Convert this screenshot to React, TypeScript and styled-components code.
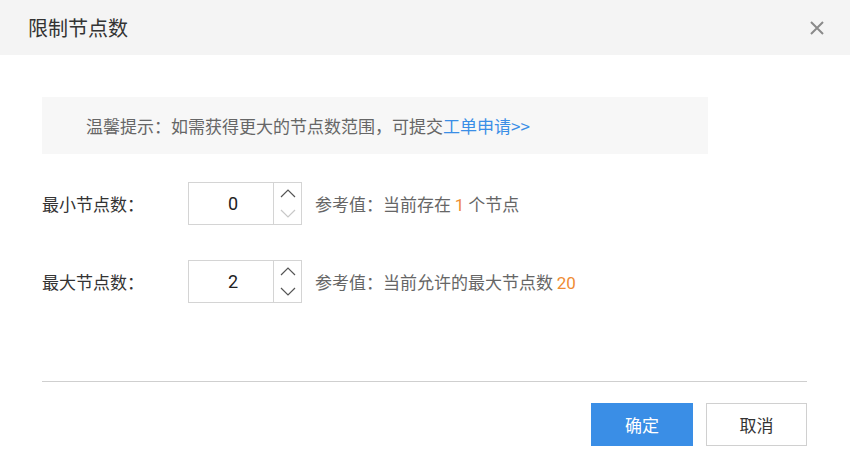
import React from "react";
import styled, { createGlobalStyle } from "styled-components";

const Global = createGlobalStyle`
  html, body { margin: 0; padding: 0; background: #fff; }
  body { font-family: "Noto Sans CJK SC", "Noto Sans", sans-serif; }
`;

const Dialog = styled.div`
  width: 850px;
  height: 467px;
  background: #fff;
  display: flex;
  flex-direction: column;
`;

const Header = styled.div`
  height: 55px;
  background: #f4f4f4;
  display: flex;
  align-items: center;
  justify-content: space-between;
  padding: 0 24px 0 28px;
  box-sizing: border-box;
`;

const Title = styled.div`
  font-size: 20px;
  color: #333;
  line-height: 1;
`;

const Close = styled.button`
  border: 0;
  background: transparent;
  padding: 0;
  width: 18px;
  height: 18px;
  display: flex;
  align-items: center;
  justify-content: center;
  cursor: pointer;
`;

const Body = styled.div`
  padding: 42px 42px 0 42px;
  display: flex;
  flex-direction: column;
`;

const Tip = styled.div`
  width: 666px;
  height: 57px;
  background: #f7f7f7;
  box-sizing: border-box;
  padding-left: 44px;
  display: flex;
  align-items: center;
  font-size: 17px;
  color: #666;
`;

const Link = styled.a`
  color: #3a8ee6;
  text-decoration: none;
`;

const Rows = styled.div`
  display: flex;
  flex-direction: column;
  gap: 35px;
  margin-top: 28px;
`;

const Row = styled.div`
  display: flex;
  align-items: center;
  height: 43px;
`;

const Label = styled.div`
  width: 146px;
  font-size: 17px;
  color: #333;
`;

const NumberBox = styled.div`
  width: 114px;
  height: 43px;
  box-sizing: border-box;
  border: 1px solid #d4d4d4;
  display: flex;
`;

const Value = styled.div`
  flex: 1;
  display: flex;
  align-items: center;
  justify-content: center;
  padding-left: 4px;
  font-family: Roboto, "Liberation Sans", Arial, sans-serif;
  font-size: 18px;
  color: #222;
  border-right: 1px solid #d4d4d4;
`;

const Spinner = styled.div`
  width: 27px;
  display: flex;
  flex-direction: column;
`;

const Step = styled.div<{ $disabled?: boolean }>`
  flex: 1;
  display: flex;
  align-items: center;
  justify-content: center;
  color: ${(p) => (p.$disabled ? "#c8c8c8" : "#555")};
`;

const Ref = styled.div`
  margin-left: 13px;
  font-size: 17px;
  color: #666;
`;

const Num = styled.span`
  color: #ef8c33;
  font-family: Roboto, "Liberation Sans", Arial, sans-serif;
`;

const Divider = styled.div`
  height: 1px;
  background: #cfcfcf;
  margin: 78px 1px 0 0;
`;

const Footer = styled.div`
  display: flex;
  justify-content: flex-end;
  gap: 13px;
  margin-top: 21px;
  padding-right: 1px;
`;

const Button = styled.button<{ $primary?: boolean }>`
  width: ${(p) => (p.$primary ? "102px" : "101px")};
  height: 43px;
  box-sizing: border-box;
  font-family: "Noto Sans CJK SC", sans-serif;
  font-size: 17px;
  border: 1px solid ${(p) => (p.$primary ? "#3a8ee6" : "#d0d0d0")};
  background: ${(p) => (p.$primary ? "#3a8ee6" : "#fff")};
  color: ${(p) => (p.$primary ? "#fff" : "#333")};
  padding: 0;
  cursor: pointer;
`;

const Chevron = ({ up }: { up?: boolean }) => (
  <svg width="16" height="9" viewBox="0 0 16 9">
    <path
      d={up ? "M1 8 L8 1 L15 8" : "M1 1 L8 8 L15 1"}
      fill="none"
      stroke="currentColor"
      strokeWidth="1.2"
    />
  </svg>
);

const NumberInput = ({ value, minReached }: { value: number; minReached?: boolean }) => (
  <NumberBox>
    <Value>{value}</Value>
    <Spinner>
      <Step>
        <Chevron up />
      </Step>
      <Step $disabled={minReached}>
        <Chevron />
      </Step>
    </Spinner>
  </NumberBox>
);

export default function App() {
  return (
    <>
      <Global />
      <Dialog>
        <Header>
          <Title>限制节点数</Title>
          <Close aria-label="close">
            <svg width="14" height="14" viewBox="0 0 14 14">
              <path d="M1 1 L13 13 M13 1 L1 13" stroke="#8a8a8a" strokeWidth="2" />
            </svg>
          </Close>
        </Header>
        <Body>
          <Tip>
            温馨提示：如需获得更大的节点数范围，可提交<Link href="#">工单申请&gt;&gt;</Link>
          </Tip>
          <Rows>
            <Row>
              <Label>最小节点数：</Label>
              <NumberInput value={0} minReached />
              <Ref>
                参考值：当前存在 <Num>1</Num> 个节点
              </Ref>
            </Row>
            <Row>
              <Label>最大节点数：</Label>
              <NumberInput value={2} />
              <Ref>
                参考值：当前允许的最大节点数 <Num>20</Num>
              </Ref>
            </Row>
          </Rows>
          <Divider />
          <Footer>
            <Button $primary>确定</Button>
            <Button>取消</Button>
          </Footer>
        </Body>
      </Dialog>
    </>
  );
}
